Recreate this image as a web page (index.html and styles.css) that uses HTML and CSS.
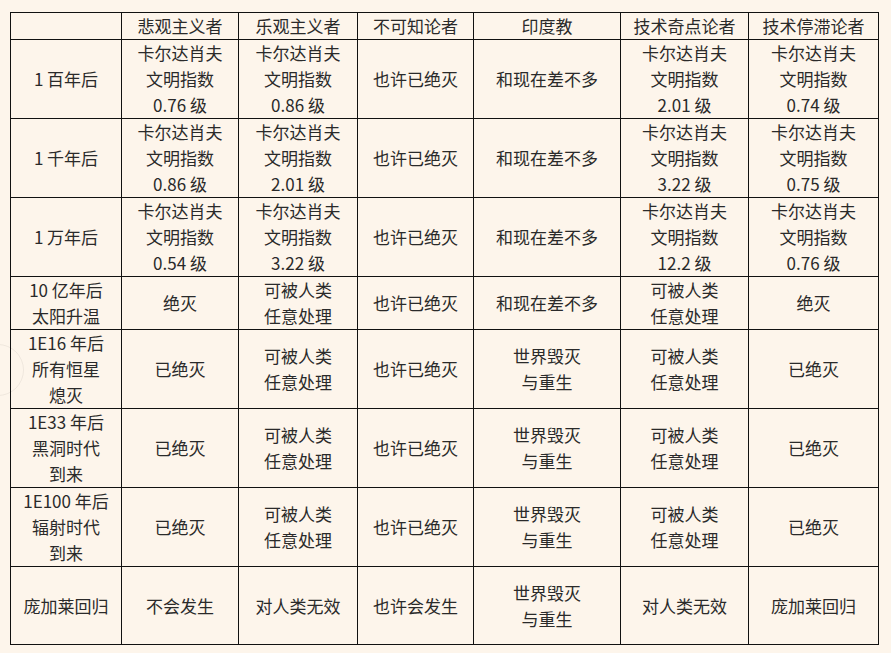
FILE: index.html
```html
<!DOCTYPE html>
<html lang="zh">
<head>
<meta charset="utf-8">
<link rel="stylesheet" href="styles.css">
</head>
<body>
<div class="ghost"></div>
<table class="grid">
  <colgroup>
    <col class="c0"><col class="c1"><col class="c2"><col class="c3"><col class="c4"><col class="c5"><col class="c6">
  </colgroup>
  <thead>
    <tr class="h27"><th></th><th>悲观主义者</th><th>乐观主义者</th><th>不可知论者</th><th>印度教</th><th>技术奇点论者</th><th>技术停滞论者</th></tr>
  </thead>
  <tbody>
    <tr class="h79"><td>1 百年后</td><td>卡尔达肖夫<br>文明指数<br>0.76 级</td><td>卡尔达肖夫<br>文明指数<br>0.86 级</td><td>也许已绝灭</td><td>和现在差不多</td><td>卡尔达肖夫<br>文明指数<br>2.01 级</td><td>卡尔达肖夫<br>文明指数<br>0.74 级</td></tr>
    <tr class="h79"><td>1 千年后</td><td>卡尔达肖夫<br>文明指数<br>0.86 级</td><td>卡尔达肖夫<br>文明指数<br>2.01 级</td><td>也许已绝灭</td><td>和现在差不多</td><td>卡尔达肖夫<br>文明指数<br>3.22 级</td><td>卡尔达肖夫<br>文明指数<br>0.75 级</td></tr>
    <tr class="h79"><td>1 万年后</td><td>卡尔达肖夫<br>文明指数<br>0.54 级</td><td>卡尔达肖夫<br>文明指数<br>3.22 级</td><td>也许已绝灭</td><td>和现在差不多</td><td>卡尔达肖夫<br>文明指数<br>12.2 级</td><td>卡尔达肖夫<br>文明指数<br>0.76 级</td></tr>
    <tr class="h52"><td>10 亿年后<br>太阳升温</td><td>绝灭</td><td>可被人类<br>任意处理</td><td>也许已绝灭</td><td>和现在差不多</td><td>可被人类<br>任意处理</td><td>绝灭</td></tr>
    <tr class="h79"><td>1E16 年后<br>所有恒星<br>熄灭</td><td>已绝灭</td><td>可被人类<br>任意处理</td><td>也许已绝灭</td><td>世界毁灭<br>与重生</td><td>可被人类<br>任意处理</td><td>已绝灭</td></tr>
    <tr class="h79"><td>1E33 年后<br>黑洞时代<br>到来</td><td>已绝灭</td><td>可被人类<br>任意处理</td><td>也许已绝灭</td><td>世界毁灭<br>与重生</td><td>可被人类<br>任意处理</td><td>已绝灭</td></tr>
    <tr class="h79"><td>1E100 年后<br>辐射时代<br>到来</td><td>已绝灭</td><td>可被人类<br>任意处理</td><td>也许已绝灭</td><td>世界毁灭<br>与重生</td><td>可被人类<br>任意处理</td><td>已绝灭</td></tr>
    <tr class="h78"><td>庞加莱回归</td><td>不会发生</td><td>对人类无效</td><td>也许会发生</td><td>世界毁灭<br>与重生</td><td>对人类无效</td><td>庞加莱回归</td></tr>
  </tbody>
</table>
</body>
</html>
```
FILE: styles.css
```css
html, body {
  margin: 0;
  padding: 0;
  background: #fdf5eb;
}
body {
  position: relative;
  width: 891px;
  height: 653px;
  overflow: hidden;
  font-family: "Noto Sans CJK SC", "Noto Sans", sans-serif;
  color: #2a2a2a;
}
.grid {
  border-collapse: collapse;
  table-layout: fixed;
  width: 868px;
  margin: 12px 0 0 10px;
  font-size: 17px;
  line-height: 26px;
}
.grid th, .grid td {
  border: 1px solid #111;
  padding: 0;
  text-align: center;
  vertical-align: middle;
  font-weight: normal;
}
.c0 { width: 111px; }
.c1 { width: 117px; }
.c2 { width: 119px; }
.c3 { width: 116px; }
.c4 { width: 147px; }
.c5 { width: 128px; }
.c6 { width: 130px; }
.h27 { height: 27px; }
.h79 { height: 79px; }
.h52 { height: 52px; }
.h78 { height: 78px; }
.ghost {
  position: absolute;
  left: -28px;
  top: 344px;
  width: 50px;
  height: 50px;
  border-radius: 50%;
  border: 1px solid rgba(0,0,0,0.06);
}
```
